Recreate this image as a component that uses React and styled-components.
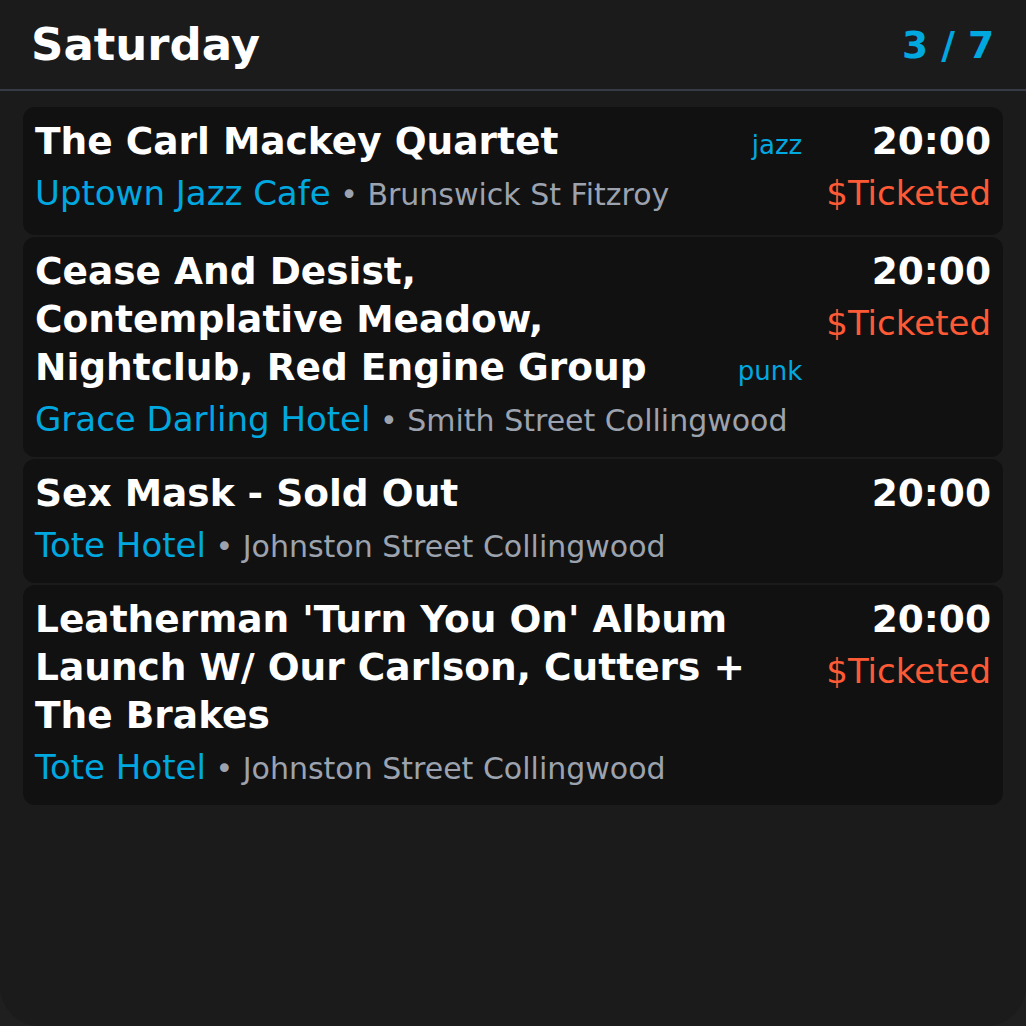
import React from 'react';
import styled, { createGlobalStyle } from 'styled-components';

const GlobalStyle = createGlobalStyle`
    html, body {
        margin: 0;
        padding: 0;
        background-color: #1f1f1f;
    }
    * {
        box-sizing: border-box;
    }
`;

const Screen = styled.div`
    width: 1026px;
    height: 1026px;
    background-color: #1b1b1b;
    border-radius: 0 0 40px 40px;
    font-family: 'DejaVu Sans', 'Noto Sans', sans-serif;
    overflow: hidden;
`;

const Header = styled.div`
    height: 91px;
    padding: 0 32px 0 31px;
    display: flex;
    align-items: center;
    justify-content: space-between;
    border-bottom: 2px solid #363b45;
`;

const Day = styled.h1`
    margin: 0;
    font-size: 45px;
    font-weight: 700;
    color: #ffffff;
    line-height: 89px;
`;

const Counter = styled.div`
    font-size: 37.5px;
    font-weight: 700;
    color: #00a8e0;
`;

const List = styled.div`
    padding: 16px 23px 0;
    display: flex;
    flex-direction: column;
    gap: 2px;
`;

const Card = styled.div`
    background-color: #111111;
    border-radius: 12px;
    padding: 10px 12px 14px;
    display: flex;
    gap: 24px;
`;

const Main = styled.div`
    flex: 1;
    min-width: 0;
    display: flex;
    flex-direction: column;
`;

const TitleRow = styled.div`
    display: flex;
    align-items: last baseline;
    gap: 16px;
`;

const Title = styled.div`
    flex: 1;
    font-size: 37.5px;
    font-weight: 700;
    line-height: 48px;
    color: #ffffff;
`;

const Genre = styled.span`
    font-size: 26px;
    color: #00a8e0;
`;

const Venue = styled.div`
    margin-top: 4px;
    font-size: 34px;
    line-height: 48px;
    color: #00a8e0;
    white-space: nowrap;
`;

const Address = styled.span`
    font-size: 30px;
    line-height: 1;
    color: #9ca3af;
`;

const Side = styled.div`
    display: flex;
    flex-direction: column;
    align-items: flex-end;
`;

const Time = styled.div`
    font-size: 37.5px;
    font-weight: 700;
    line-height: 48px;
    color: #ffffff;
`;

const Ticket = styled.div`
    font-size: 34px;
    line-height: 56px;
    color: #ff5a36;
`;

const gigs = [
    {
        title: 'The Carl Mackey Quartet',
        genre: 'jazz',
        venue: 'Uptown Jazz Cafe',
        address: 'Brunswick St Fitzroy',
        time: '20:00',
        ticketed: true,
    },
    {
        title: 'Cease And Desist, Contemplative Meadow, Nightclub, Red Engine Group',
        genre: 'punk',
        venue: 'Grace Darling Hotel',
        address: 'Smith Street Collingwood',
        time: '20:00',
        ticketed: true,
    },
    {
        title: 'Sex Mask - Sold Out',
        venue: 'Tote Hotel',
        address: 'Johnston Street Collingwood',
        time: '20:00',
        ticketed: false,
    },
    {
        title: "Leatherman 'Turn You On' Album Launch W/ Our Carlson, Cutters + The Brakes",
        venue: 'Tote Hotel',
        address: 'Johnston Street Collingwood',
        time: '20:00',
        ticketed: true,
    },
];

const App = () => (
    <Screen>
        <GlobalStyle />
        <Header>
            <Day>Saturday</Day>
            <Counter>3 / 7</Counter>
        </Header>
        <List>
            {gigs.map((gig, i) => (
                <Card key={i}>
                    <Main>
                        <TitleRow>
                            <Title>{gig.title}</Title>
                            {gig.genre && <Genre>{gig.genre}</Genre>}
                        </TitleRow>
                        <Venue>
                            {gig.venue}
                            <Address> • {gig.address}</Address>
                        </Venue>
                    </Main>
                    <Side>
                        <Time>{gig.time}</Time>
                        {gig.ticketed && <Ticket>$Ticketed</Ticket>}
                    </Side>
                </Card>
            ))}
        </List>
    </Screen>
);

export default App;
